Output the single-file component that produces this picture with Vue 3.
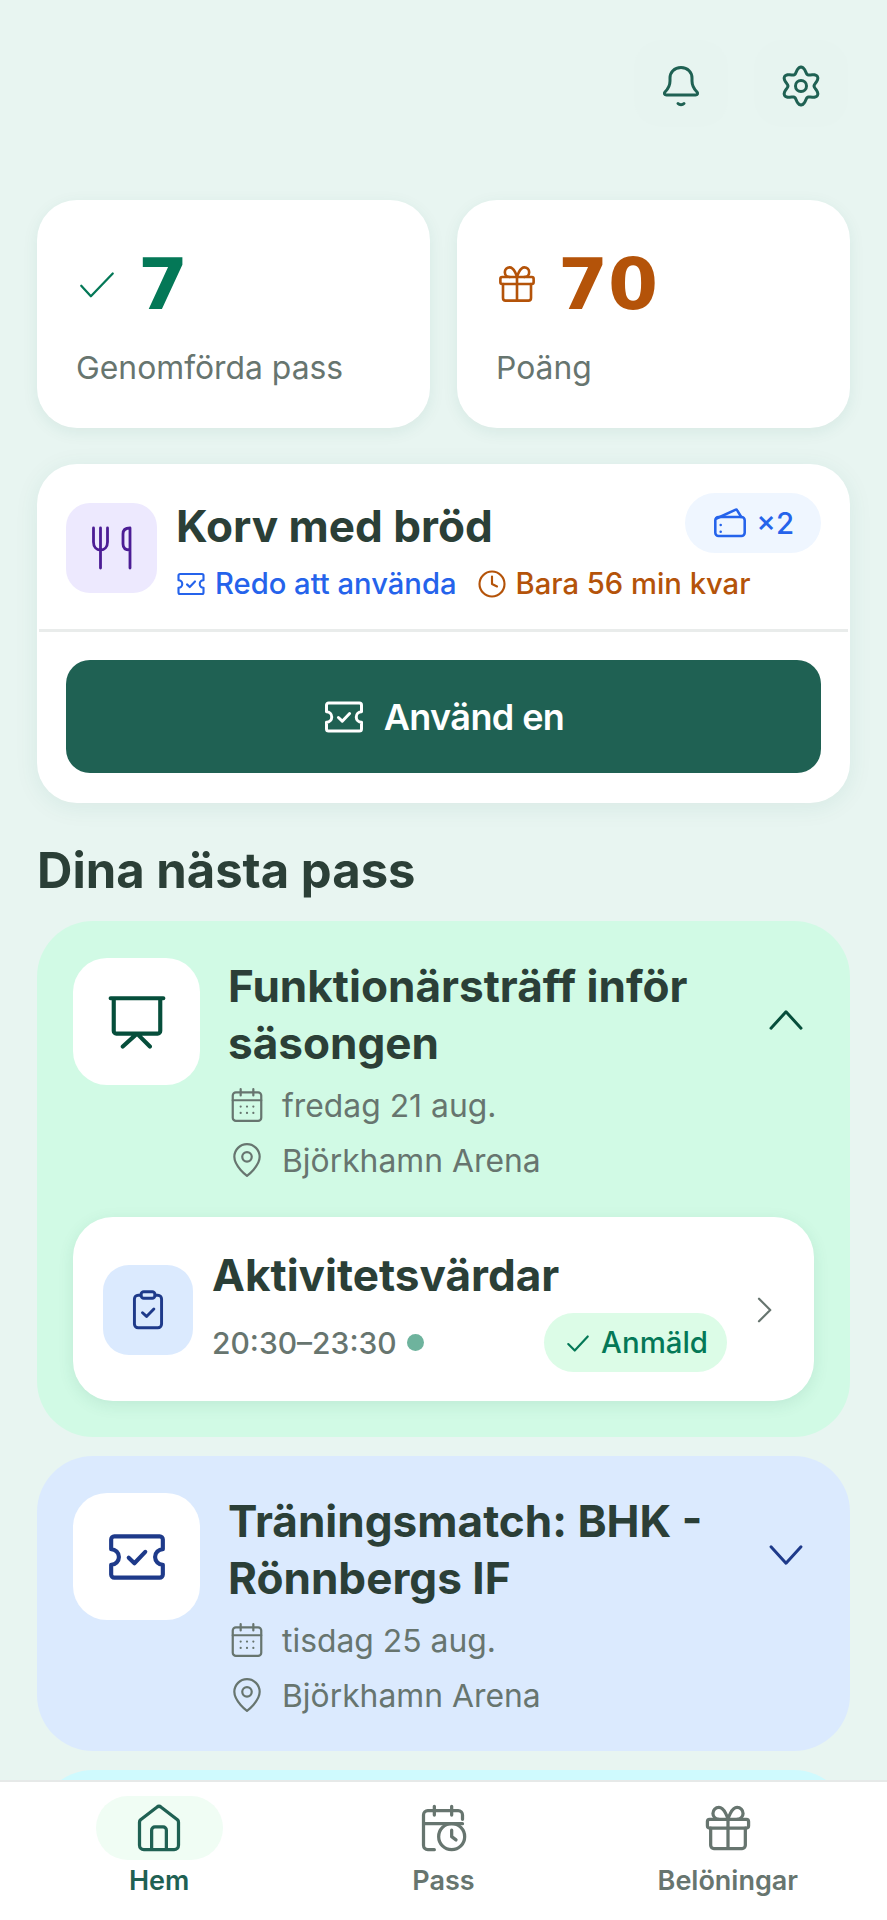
<script setup>
const events = [
  {
    tone: "green",
    title: ["Funktionärsträff inför", "säsongen"],
    date: "fredag 21 aug.",
    place: "Björkhamn Arena",
    open: true,
    icon: "board",
  },
  {
    tone: "blue",
    title: ["Träningsmatch: BHK -", "Rönnbergs IF"],
    date: "tisdag 25 aug.",
    place: "Björkhamn Arena",
    open: false,
    icon: "ticket",
  },
];

const ticketPath =
  "M3.2 4h17.600A1.200 1.200 0 0 1 22 5.200V9a3 3 0 0 0 0 6v3.800a1.200 1.200 0 0 1-1.200 1.200H3.200A1.200 1.200 0 0 1 2 18.800V15a3 3 0 0 0 0-6V5.200A1.200 1.200 0 0 1 3.200 4z";
const ticketCheck = "M8.800 12.300l2.200 2.100 4.200-4.400";
const giftPath =
  "M4 12v8a1.500 1.500 0 0 0 1.500 1.500h13A1.500 1.500 0 0 0 20 20v-8M12 8v13.500M12 8S10.500 2.500 7.800 2.500a2.700 2.700 0 0 0 0 5.500M12 8s1.500-5.500 4.200-5.500a2.700 2.700 0 0 1 0 5.500";

// wavy six-lobed outline of the settings icon
const gearPath = Array.from({ length: 72 }, (_, i) => {
  const a = (i * Math.PI) / 36;
  const r = 16 + 3 * Math.cos(6 * a);
  const x = 22 + r * Math.sin(a);
  const y = 22 - r * Math.cos(a);
  return `${i ? "L" : "M"}${x.toFixed(2)} ${y.toFixed(2)}`;
}).join("") + "z";
</script>

<template>
  <div class="phone">
    <main class="scroll">
      <div class="top-actions">
        <button class="icon-btn" type="button">
          <svg viewBox="0 0 44 44" class="top-icon">
            <path d="M22 3.500C15 3.500 11 8.500 11 14v3c0 5-2 8-5 11-1.200 1.500-.5 3 1.500 3h29c2 0 2.700-1.500 1.500-3-3-3-5-6-5-11v-3c0-5.500-4-10.500-11-10.500z" />
            <path d="M19 39.500c1.500 1.500 4.500 1.500 6 0" />
          </svg>
        </button>
        <button class="icon-btn" type="button">
          <svg viewBox="0 0 44 44" class="top-icon">
            <path :d="gearPath" />
            <circle cx="22" cy="22" r="5.500" />
          </svg>
        </button>
      </div>

      <section class="stats">
        <div class="stat">
          <div class="stat-top">
            <svg viewBox="0 0 24 24" class="stat-icon green-stroke"><path d="M3 13l5.500 6L21 6" /></svg>
            <span class="stat-num green-text">7</span>
          </div>
          <div class="stat-label">Genomförda pass</div>
        </div>
        <div class="stat">
          <div class="stat-top">
            <svg viewBox="0 0 24 24" class="stat-icon orange-stroke">
              <rect x="2.500" y="8" width="19" height="4" rx="1" />
              <path :d="giftPath" />
            </svg>
            <span class="stat-num orange-text">70</span>
          </div>
          <div class="stat-label">Poäng</div>
        </div>
      </section>

      <section class="voucher">
        <div class="voucher-head">
          <div class="food-tile">
            <svg viewBox="0 0 24 24" class="food-icon">
              <path d="M2.750 2v7c0 2.500 1.500 4 3.500 4s3.500-1.500 3.500-4V2M6.250 2v20M21 2v20M21 2c-2.300 0-3.500 1-3.500 3v5c0 2 1.200 3 3.500 3" />
            </svg>
          </div>
          <div class="voucher-text">
            <div class="voucher-title">Korv med bröd</div>
            <div class="voucher-meta">
              <span class="meta blue-text">
                <svg viewBox="0 0 24 24" class="meta-icon"><path :d="ticketPath" /><path :d="ticketCheck" /></svg>
                Redo att använda
              </span>
              <span class="meta orange-text">
                <svg viewBox="0 0 24 24" class="meta-icon"><circle cx="12" cy="12" r="10" /><path d="M12 6v6l4 2" /></svg>
                Bara 56 min kvar
              </span>
            </div>
          </div>
          <div class="count-pill">
            <svg viewBox="0 0 24 24" class="pill-icon">
              <rect x="2.200" y="8" width="19.600" height="12.700" rx="2.200" />
              <path d="M3 9l12.500-5.800a1 1 0 0 1 1.300.4L19.500 8M5.800 13.300v.01M5.800 17.800v.01" />
            </svg>
            ×2
          </div>
        </div>
        <div class="voucher-foot">
          <button class="use-btn" type="button">
            <svg viewBox="0 0 24 24" class="use-icon"><path :d="ticketPath" /><path :d="ticketCheck" /></svg>
            Använd en
          </button>
        </div>
      </section>

      <h2 class="section-title">Dina nästa pass</h2>

      <section
        v-for="event in events"
        :key="event.date"
        class="event"
        :class="event.tone"
      >
        <div class="event-head">
          <div class="event-tile">
            <svg v-if="event.icon === 'board'" viewBox="0 0 24 24" class="event-icon">
              <path d="M1.800 2.800h20.400M3 2.800v12.700a1 1 0 0 0 1 1h16a1 1 0 0 0 1-1V2.800M12 16.500l-5.500 5M12 16.500l5 5" />
            </svg>
            <svg v-else viewBox="0 0 24 24" class="event-icon">
              <path :d="ticketPath" /><path :d="ticketCheck" />
            </svg>
          </div>
          <div class="event-body">
            <div class="event-title">
              <div v-for="line in event.title" :key="line">{{ line }}</div>
            </div>
            <div class="event-line">
              <svg viewBox="0 0 24 24" class="line-icon">
                <rect x="3" y="4" width="18" height="18" rx="2" />
                <path d="M3 9h18M8 2v4M16 2v4M8 13h.01M12 13h.01M16 13h.01M8 17h.01M12 17h.01M16 17h.01" />
              </svg>
              {{ event.date }}
            </div>
            <div class="event-line">
              <svg viewBox="0 0 24 24" class="line-icon">
                <path d="M20 10c0 6-8 12-8 12s-8-6-8-12a8 8 0 0 1 16 0z" />
                <circle cx="12" cy="10" r="3" />
              </svg>
              {{ event.place }}
            </div>
          </div>
          <svg viewBox="0 0 24 24" class="chev">
            <path :d="event.open ? 'M2 17.500L12 6.500l10 11' : 'M2 6.500l10 11 10-11'" />
          </svg>
        </div>

        <div v-if="event.open" class="shift">
          <div class="shift-tile">
            <svg viewBox="0 0 24 24" class="shift-icon">
              <rect x="8.200" y="2" width="7.600" height="3.600" rx="1.500" />
              <path d="M8.200 4H6.600a2 2 0 0 0-2 2v13.700a2 2 0 0 0 2 2h10.800a2 2 0 0 0 2-2V6a2 2 0 0 0-2-2h-1.600M9 13.500l2.200 2 4-4" />
            </svg>
          </div>
          <div class="shift-body">
            <div class="shift-title">Aktivitetsvärdar</div>
            <div class="shift-row">
              <span class="shift-time">20:30–23:30</span>
              <span class="dot"></span>
              <span class="signed">
                <svg viewBox="0 0 24 24" class="signed-icon"><path d="M3 13l6 6L21 6" /></svg>
                Anmäld
              </span>
            </div>
          </div>
          <svg viewBox="0 0 24 24" class="shift-chev"><path d="M8 3l9 9-9 9" /></svg>
        </div>
      </section>

      <section class="event cyan peek"></section>
    </main>

    <nav class="tabbar">
      <div class="tab active">
        <div class="tab-icon-wrap">
          <svg viewBox="0 0 24 24" class="tab-icon">
            <path d="M3 9.300a1.500 1.500 0 0 1 .5-1.100l7.500-5.800a1.500 1.500 0 0 1 2 0l7.500 5.800a1.500 1.500 0 0 1 .5 1.100V20a2 2 0 0 1-2 2H5a2 2 0 0 1-2-2zM8.600 22v-9a1.500 1.500 0 0 1 1.500-1.500h3.800a1.500 1.500 0 0 1 1.500 1.500v9" />
          </svg>
        </div>
        <span>Hem</span>
      </div>
      <div class="tab">
        <div class="tab-icon-wrap">
          <svg viewBox="0 0 24 24" class="tab-icon">
            <path d="M8 2v4M16 2v4M3 10h18M21 8V6a2 2 0 0 0-2-2H5a2 2 0 0 0-2 2v14a2 2 0 0 0 2 2h3" />
            <circle cx="16" cy="16" r="6" />
            <path d="M16 13v3l2 1.500" />
          </svg>
        </div>
        <span>Pass</span>
      </div>
      <div class="tab">
        <div class="tab-icon-wrap">
          <svg viewBox="0 0 24 24" class="tab-icon">
            <rect x="2.500" y="8" width="19" height="4" rx="1" />
            <path :d="giftPath" />
          </svg>
        </div>
        <span>Belöningar</span>
      </div>
    </nav>
  </div>
</template>

<style>
html,
body {
  margin: 0;
  background: #e8f5f1;
}
</style>

<style scoped>
svg {
  fill: none;
  stroke: currentColor;
  stroke-linecap: round;
  stroke-linejoin: round;
  stroke-width: 2;
  flex: none;
  display: block;
}
.phone {
  width: 887px;
  height: 1920px;
  display: flex;
  flex-direction: column;
  overflow: hidden;
  background: #e8f5f1;
  font-family: Inter, "Liberation Sans", sans-serif;
  color: #2b3f37;
}
.scroll {
  flex: 1;
  min-height: 0;
  overflow: hidden;
  padding: 40px 37px 0;
}
.top-actions {
  display: flex;
  justify-content: flex-end;
  gap: 26px;
  height: 86px;
  padding-right: 2px;
}
.icon-btn {
  width: 94px;
  height: 87px;
  padding: 5px 0 0;
  border: 0;
  border-radius: 28px;
  background: #e7f4f0;
  color: #1f6153;
  display: flex;
  align-items: center;
  justify-content: center;
}
.top-icon {
  width: 44px;
  height: 44px;
  stroke-width: 3;
}
.stats {
  margin-top: 74px;
  display: grid;
  grid-template-columns: 1fr 1fr;
  gap: 27px;
}
.stat {
  background: #fff;
  height: 228px;
  box-sizing: border-box;
  border-radius: 40px;
  padding: 40px 39px 0;
  box-shadow: 0 4px 16px rgba(31, 97, 83, 0.08);
}
.stat-top {
  display: flex;
  align-items: center;
  gap: 20px;
  height: 88px;
}
.stat-icon {
  width: 42px;
  height: 42px;
}
.stat-num {
  font-family: "DejaVu Sans", sans-serif;
  font-size: 72px;
  line-height: 88px;
  font-weight: 700;
}
.stat-label {
  margin-top: 20px;
  font-size: 31.850px;
  line-height: 40px;
  color: #67756f;
}
.green-text {
  color: #047857;
}
.green-stroke {
  color: #047857;
  stroke-width: 1.300;
}
.orange-text {
  color: #b45309;
}
.orange-stroke {
  color: #b45309;
  stroke-width: 1.500;
}
.blue-text {
  color: #2563eb;
}
.voucher {
  margin-top: 36px;
  background: #fff;
  border-radius: 40px;
  box-shadow: 0 4px 24px rgba(31, 97, 83, 0.08);
  height: 339px;
}
.voucher-head {
  height: 168px;
  box-sizing: border-box;
  padding: 29px 27px 0;
  display: flex;
  align-items: flex-start;
  gap: 19px;
  border-bottom: 3px solid #e9eceb;
  margin: 0 2px;
}
.food-tile {
  margin-top: 10px;
  width: 91px;
  height: 90px;
  border-radius: 24px;
  background: #ede9fe;
  color: #4c1d95;
  display: flex;
  align-items: center;
  justify-content: center;
  flex: none;
}
.food-icon {
  width: 48px;
  height: 48px;
  stroke-width: 1.400;
}
.voucher-text {
  flex: 1;
  min-width: 0;
  margin-top: 6px;
}
.voucher-title {
  font-size: 44.100px;
  line-height: 54px;
  font-weight: 700;
}
.voucher-meta {
  margin-top: 14px;
  display: flex;
  gap: 20px;
  font-size: 29.200px;
  font-weight: 500;
  line-height: 34px;
  white-space: nowrap;
}
.meta {
  display: flex;
  align-items: center;
  gap: 9px;
}
.meta-icon {
  width: 30px;
  height: 30px;
  stroke-width: 1.700;
}
.count-pill {
  display: flex;
  align-items: center;
  gap: 8px;
  height: 60px;
  padding: 0 27px;
  border-radius: 30px;
  background: #eff6ff;
  color: #2563eb;
  font-size: 29.400px;
  font-weight: 500;
  flex: none;
}
.pill-icon {
  width: 36px;
  height: 36px;
  stroke-width: 1.700;
}
.voucher-foot {
  padding: 28px 29px 0;
}
.use-btn {
  width: 100%;
  height: 113px;
  border: 0;
  border-radius: 24px;
  background: #1f6153;
  color: #fff;
  font-family: inherit;
  font-size: 36px;
  font-weight: 600;
  letter-spacing: -0.600px;
  display: flex;
  align-items: center;
  justify-content: center;
  gap: 19px;
}
.use-icon {
  width: 42px;
  height: 42px;
  stroke-width: 1.700;
}
.section-title {
  margin: 41px 0 0;
  font-size: 49px;
  line-height: 54px;
  font-weight: 700;
}
.event {
  margin-top: 23px;
  border-radius: 56px;
  padding: 37px 36px 32px;
}
.event + .event {
  margin-top: 19px;
}
.event.green {
  background: #d1fae5;
  color: #064e3b;
}
.event.blue {
  background: #dbeafe;
  color: #1e3a8a;
}
.event.cyan {
  background: #cffafe;
}
.peek {
  height: 120px;
}
.event-head {
  display: flex;
  align-items: flex-start;
}
.event-tile {
  width: 127px;
  height: 127px;
  border-radius: 34px;
  background: #fff;
  display: flex;
  align-items: center;
  justify-content: center;
  flex: none;
}
.event-icon {
  width: 62px;
  height: 62px;
  stroke-width: 1.600;
}
.event-body {
  flex: 1;
  margin-left: 28px;
  min-width: 0;
}
.event-title {
  font-size: 44.100px;
  line-height: 57px;
  font-weight: 700;
  color: #2b3f37;
}
.event-line {
  display: flex;
  align-items: center;
  gap: 16px;
  margin-top: 7px;
  height: 48px;
  font-size: 31.850px;
  color: #67756f;
}
.event-title + .event-line {
  margin-top: 9px;
}
.line-icon {
  width: 38px;
  height: 38px;
  stroke-width: 1.400;
}
.chev {
  width: 36px;
  height: 36px;
  margin: 44px 10px 0 0;
  stroke-width: 2;
}
.shift {
  margin-top: 33px;
  margin-bottom: 4px;
  height: 184px;
  box-sizing: border-box;
  background: #fff;
  border-radius: 40px;
  padding: 2px 35px 0 30px;
  display: flex;
  align-items: center;
  box-shadow: 0 4px 16px rgba(31, 97, 83, 0.1);
}
.shift-tile {
  width: 90px;
  height: 90px;
  border-radius: 26px;
  background: #dbeafe;
  color: #1e3a8a;
  display: flex;
  align-items: center;
  justify-content: center;
  flex: none;
}
.shift-icon {
  width: 44px;
  height: 44px;
  stroke-width: 1.600;
}
.shift-body {
  flex: 1;
  margin-left: 19px;
  min-width: 0;
}
.shift-title {
  font-size: 44.100px;
  line-height: 54px;
  font-weight: 700;
  color: #2b3f37;
}
.shift-row {
  display: flex;
  align-items: center;
  margin-top: 11px;
}
.shift-time {
  font-size: 30px;
  font-weight: 500;
  color: #67756f;
}
.dot {
  width: 17px;
  height: 17px;
  border-radius: 50%;
  background: #6eb39d;
  margin-left: 10px;
}
.signed {
  margin-left: auto;
  display: flex;
  align-items: center;
  gap: 10px;
  height: 59px;
  padding: 0 19px 0 21px;
  border-radius: 30px;
  background: #dcfce7;
  color: #047857;
  font-size: 29.400px;
  font-weight: 500;
}
.signed-icon {
  width: 26px;
  height: 26px;
}
.shift-chev {
  width: 30px;
  height: 30px;
  color: #67756f;
  margin-left: 22px;
  stroke-width: 1.800;
}
.tabbar {
  height: 140px;
  flex: none;
  box-sizing: border-box;
  background: #fff;
  border-top: 2px solid #e6e9e8;
  display: grid;
  grid-template-columns: 1fr 1fr 1fr;
  padding: 14px 17px 0;
  color: #67756f;
}
.tab {
  display: flex;
  flex-direction: column;
  align-items: center;
  font-size: 27px;
  font-weight: 600;
}
.tab-icon-wrap {
  width: 127px;
  height: 64px;
  border-radius: 32px;
  display: flex;
  align-items: center;
  justify-content: center;
}
.tab.active {
  color: #1f6153;
}
.tab.active .tab-icon-wrap {
  background: #f0fdf4;
}
.tab-icon {
  width: 52px;
  height: 52px;
  stroke-width: 1.500;
}
.tab span {
  margin-top: 4px;
  line-height: 34px;
}
</style>
